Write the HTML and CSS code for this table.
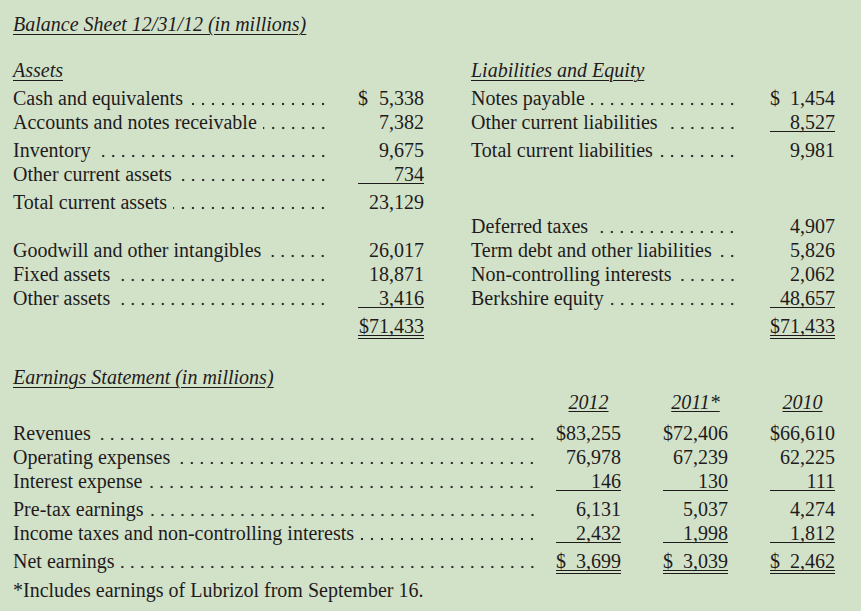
FILE: index.html
```html
<!DOCTYPE html>
<html lang="en">
<head>
<meta charset="utf-8">
<title>Berkshire Hathaway Financial Statements</title>
<link rel="stylesheet" href="styles.css">
</head>
<body>
<main class="page">
  <h1 class="title">Balance Sheet 12/31/12 (in millions)</h1>

  <section class="bs">
    <div class="bs-row bs-head">
      <div class="lbl"><span class="hd">Assets</span></div>
      <div></div>
      <div class="lbl r"><span class="hd">Liabilities and Equity</span></div>
      <div></div>
    </div>
    <div class="bs-row">
      <div class="lbl"><span>Cash and equivalents</span><span class="lead"></span></div>
      <div class="amt split"><span>$</span><span>5,338</span></div>
      <div class="lbl r"><span>Notes payable</span><span class="lead"></span></div>
      <div class="amt split"><span>$</span><span>1,454</span></div>
    </div>
    <div class="bs-row">
      <div class="lbl"><span>Accounts and notes receivable</span><span class="lead"></span></div>
      <div class="amt">7,382</div>
      <div class="lbl r"><span>Other current liabilities</span><span class="lead"></span></div>
      <div class="amt u">8,527</div>
    </div>
    <div class="bs-row">
      <div class="lbl"><span>Inventory</span><span class="lead"></span></div>
      <div class="amt">9,675</div>
      <div class="lbl r"><span>Total current liabilities</span><span class="lead"></span></div>
      <div class="amt">9,981</div>
    </div>
    <div class="bs-row">
      <div class="lbl"><span>Other current assets</span><span class="lead"></span></div>
      <div class="amt u">734</div>
      <div class="lbl r"></div>
      <div></div>
    </div>
    <div class="bs-row">
      <div class="lbl"><span>Total current assets</span><span class="lead"></span></div>
      <div class="amt">23,129</div>
      <div class="lbl r"></div>
      <div></div>
    </div>
    <div class="bs-row">
      <div class="lbl"></div>
      <div></div>
      <div class="lbl r"><span>Deferred taxes</span><span class="lead"></span></div>
      <div class="amt">4,907</div>
    </div>
    <div class="bs-row">
      <div class="lbl"><span>Goodwill and other intangibles</span><span class="lead"></span></div>
      <div class="amt">26,017</div>
      <div class="lbl r"><span>Term debt and other liabilities</span><span class="lead"></span></div>
      <div class="amt">5,826</div>
    </div>
    <div class="bs-row">
      <div class="lbl"><span>Fixed assets</span><span class="lead"></span></div>
      <div class="amt">18,871</div>
      <div class="lbl r"><span>Non-controlling interests</span><span class="lead"></span></div>
      <div class="amt">2,062</div>
    </div>
    <div class="bs-row">
      <div class="lbl"><span>Other assets</span><span class="lead"></span></div>
      <div class="amt u">3,416</div>
      <div class="lbl r"><span>Berkshire equity</span><span class="lead"></span></div>
      <div class="amt u">48,657</div>
    </div>
    <div class="bs-row">
      <div class="lbl"></div>
      <div class="amt uu">$71,433</div>
      <div class="lbl r"></div>
      <div class="amt uu">$71,433</div>
    </div>
  </section>

  <section class="es">
    <h2 class="title">Earnings Statement (in millions)</h2>
    <div class="es-row es-head">
      <div></div>
      <div class="yr"><span>2012</span></div>
      <div class="yr gap"><span>2011*</span></div>
      <div class="yr gap"><span>2010</span></div>
    </div>
    <div class="es-row">
      <div class="lbl e"><span>Revenues</span><span class="lead"></span></div>
      <div class="amt">$83,255</div>
      <div class="amt gap">$72,406</div>
      <div class="amt gap">$66,610</div>
    </div>
    <div class="es-row">
      <div class="lbl e"><span>Operating expenses</span><span class="lead"></span></div>
      <div class="amt">76,978</div>
      <div class="amt gap">67,239</div>
      <div class="amt gap">62,225</div>
    </div>
    <div class="es-row">
      <div class="lbl e"><span>Interest expense</span><span class="lead"></span></div>
      <div class="amt u">146</div>
      <div class="amt u gap">130</div>
      <div class="amt u gap">111</div>
    </div>
    <div class="es-row">
      <div class="lbl e"><span>Pre-tax earnings</span><span class="lead"></span></div>
      <div class="amt">6,131</div>
      <div class="amt gap">5,037</div>
      <div class="amt gap">4,274</div>
    </div>
    <div class="es-row">
      <div class="lbl e"><span>Income taxes and non-controlling interests</span><span class="lead"></span></div>
      <div class="amt u">2,432</div>
      <div class="amt u gap">1,998</div>
      <div class="amt u gap">1,812</div>
    </div>
    <div class="es-row">
      <div class="lbl e"><span>Net earnings</span><span class="lead"></span></div>
      <div class="amt uu split"><span>$</span><span>3,699</span></div>
      <div class="amt uu split gap"><span>$</span><span>3,039</span></div>
      <div class="amt uu split gap"><span>$</span><span>2,462</span></div>
    </div>
    <p class="note">*Includes earnings of Lubrizol from September 16.</p>
  </section>
</main>
</body>
</html>
```

FILE: styles.css
```css
html, body {
  margin: 0;
  padding: 0;
}

body {
  background: #d2e2c9;
  color: #1f1b1c;
  font-family: "Liberation Serif", "Times New Roman", serif;
  font-size: 20px;
  line-height: 24px;
  width: 861px;
  height: 611px;
  overflow: hidden;
}

.page {
  padding: 12px 0 0 13px;
}

.title {
  margin: 0;
  font-size: 20px;
  font-weight: normal;
  font-style: italic;
  line-height: 24px;
  text-decoration: underline;
  text-decoration-thickness: 1px;
  text-underline-offset: 3px;
}

/* Balance sheet */
.bs {
  margin-top: 22px;
}

.bs-row {
  display: grid;
  grid-template-columns: 345px 66px 346px 65px;
  align-items: start;
}

.bs-head {
  margin-bottom: 4px;
}

.hd {
  font-style: italic;
  text-decoration: underline;
  text-decoration-thickness: 1px;
  text-underline-offset: 3px;
}

.lbl {
  display: flex;
  box-sizing: border-box;
  padding-right: 29px;
  white-space: nowrap;
  min-height: 24px;
}

.lbl.r {
  padding-left: 47px;
  padding-right: 32px;
}

.lbl.e {
  padding-right: 18px;
}

.lead {
  flex: 1;
  margin-left: 6px;
  height: 24px;
  background-image: radial-gradient(circle, #2e2a2b 1.1px, rgba(46, 42, 43, 0) 1.6px);
  background-size: 10px 4px;
  background-position: right 1px top 16px;
  background-repeat: repeat-x;
}

.amt {
  display: flex;
  justify-content: flex-end;
  white-space: nowrap;
  height: 24px;
}

.amt.split {
  justify-content: space-between;
}

.amt.u {
  height: 21px;
  border-bottom: 1px solid #1f1b1c;
  margin-bottom: 6px;
}

.amt.uu {
  height: 21px;
  border-bottom: 4px double #1f1b1c;
}

/* Earnings statement */
.es {
  margin-top: 26px;
}

.es .title {
  margin-bottom: 1px;
}

.es-row {
  display: grid;
  grid-template-columns: 543px 65px 107px 107px;
  align-items: start;
}

.gap {
  margin-left: 42px;
}

.es-head {
  margin-bottom: 7px;
}

.yr {
  text-align: center;
  font-style: italic;
}

.yr span {
  text-decoration: underline;
  text-decoration-thickness: 1px;
  text-underline-offset: 2px;
}

.note {
  margin: 4px 0 0;
}
```
